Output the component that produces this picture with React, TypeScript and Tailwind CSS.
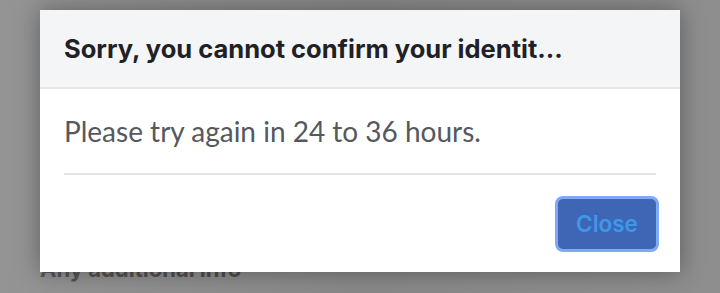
import React from 'react';

const lato = { fontFamily: '"Lato", "Open Sans", sans-serif' };
const inter = { fontFamily: '"Inter", "Lato", sans-serif' };

export default function App() {
  return (
    <div className="relative h-[293px] w-[720px] overflow-hidden bg-[#888888]" style={lato}>
      {/* page behind the overlay */}
      <div className="pl-10 pt-[255px]">
        <h2 className="text-[22px] font-bold leading-[28px] text-[#464646]" style={inter}>Any additional info</h2>
      </div>

      <div className="absolute inset-0 bg-gradient-to-r from-white/10 via-transparent to-white/5" />

      {/* modal */}
      <div className="absolute left-10 top-[10px] flex h-[262px] w-[640px] flex-col bg-white shadow-[0_0_22px_rgba(0,0,0,0.35)]">
        <div className="flex h-[79px] items-center border-b-2 border-[#e6e7e9] bg-[#f4f5f7] px-6">
          <h3 className="text-[25.5px] font-bold leading-none text-[#1f2126]" style={inter}>
            Sorry, you cannot confirm your identit...
          </h3>
        </div>
        <div className="px-6 pt-[25px]">
          <p className="pb-[25px] text-[28px] leading-[34px] text-[#55585d]">Please try again in 24 to 36 hours.</p>
          <div className="h-[2px] bg-[#e3e4e6]" />
        </div>
        <div className="flex justify-end px-6 pt-[24px]">
          <button
            className="h-[50px] w-[98px] rounded-[5px] bg-[#3f66b5] text-[22.5px] font-semibold text-[#3e97e8] ring-[3px] ring-[#7fa9f2]"
            style={inter}
          >
            Close
          </button>
        </div>
      </div>
    </div>
  );
}
